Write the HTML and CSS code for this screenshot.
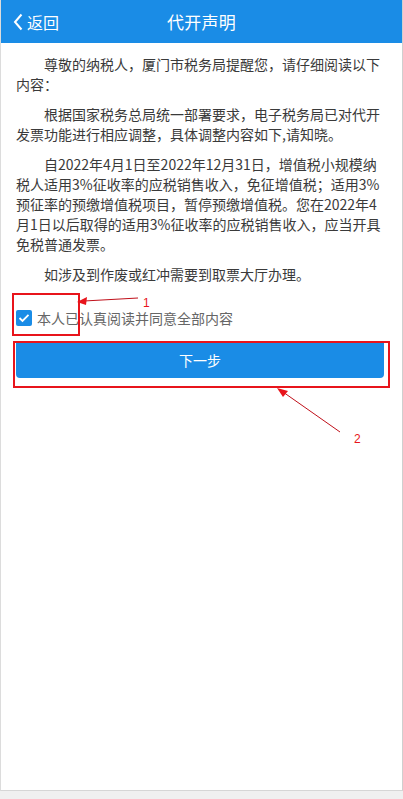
FILE: index.html
```html
<!DOCTYPE html>
<html lang="zh-CN">
<head>
<meta charset="utf-8">
<title>代开声明</title>
<link rel="stylesheet" href="styles.css">
</head>
<body>
<div class="page">
  <header class="header">
    <a class="back">
      <svg class="chev" width="10" height="18" viewBox="0 0 10 18"><path d="M8.5 1.5 L2 9 L8.5 16.5" fill="none" stroke="#fff" stroke-width="2"/></svg>
      <span>返回</span>
    </a>
    <h1 class="title">代开声明</h1>
  </header>
  <main class="content">
    <p class="para">尊敬的纳税人，厦门市税务局提醒您，请仔细阅读以下内容：</p>
    <p class="para">根据国家税务总局统一部署要求，电子税务局已对代开发票功能进行相应调整，具体调整内容如下,请知晓。</p>
    <p class="para">自2022年4月1日至2022年12月31日，增值税小规模纳税人适用3%征收率的应税销售收入，免征增值税；适用3%预征率的预缴增值税项目，暂停预缴增值税。您在2022年4月1日以后取得的适用3%征收率的应税销售收入，应当开具免税普通发票。</p>
    <p class="para">如涉及到作废或红冲需要到取票大厅办理。</p>
    <label class="agree">
      <span class="box"><svg width="12" height="10" viewBox="0 0 12 10"><path d="M1.5 5 L4.5 8 L10.5 1.8" fill="none" stroke="#fff" stroke-width="1.8"/></svg></span>
      <span class="agree-text">本人已认真阅读并同意全部内容</span>
    </label>
    <button class="next">下一步</button>
  </main>
  <svg class="marks" width="403" height="460" viewBox="0 0 403 460">
    <rect x="13" y="294" width="66" height="41" fill="none" stroke="#e8141b" stroke-width="2"/>
    <line x1="138" y1="298" x2="84" y2="301" stroke="#c0101a" stroke-width="1"/>
    <polygon points="77,302 87,297 86,305" fill="#e8141b"/>
    <text x="143" y="307" class="mark-num">1</text>
    <rect x="14" y="342" width="375" height="45" fill="none" stroke="#e8141b" stroke-width="2"/>
    <line x1="340" y1="432" x2="283" y2="392" stroke="#c0101a" stroke-width="1"/>
    <polygon points="277,388 288,391 283,397" fill="#e8141b"/>
    <text x="354" y="443" class="mark-num">2</text>
  </svg>
</div>
</body>
</html>
```

FILE: styles.css
```css
html, body {
  margin: 0;
  padding: 0;
}
body {
  background: #f0f0f0;
  font-family: "Noto Sans CJK SC", "Microsoft YaHei", sans-serif;
  height: 799px;
}
.page {
  position: relative;
  width: 401px;
  height: 790px;
  background: #fff;
  border-left: 1px solid #dcdcdc;
  border-right: 1px solid #cfcfcf;
  border-bottom: 1px solid #d6d6d6;
}
.header {
  position: relative;
  height: 43px;
  background: #1a8ce6;
  display: flex;
  align-items: center;
  justify-content: center;
  color: #fff;
}
.back {
  position: absolute;
  left: 12px;
  top: 0;
  height: 43px;
  display: flex;
  align-items: center;
  gap: 4px;
  font-size: 16px;
  color: #fff;
}
.chev {
  display: block;
}
.title {
  margin: 0;
  font-size: 17px;
  font-weight: normal;
  letter-spacing: 0.3px;
}
.content {
  padding: 11px 17px 0 15px;
}
.para {
  margin: 0 0 10px;
  font-size: 14px;
  line-height: 20px;
  text-indent: 2em;
  color: #3a3a3a;
}
.agree {
  display: flex;
  align-items: center;
  gap: 5px;
  margin-top: 26px;
  height: 16px;
}
.box {
  width: 16px;
  height: 16px;
  border-radius: 2px;
  background: #1a8ce6;
  display: flex;
  align-items: center;
  justify-content: center;
}
.agree-text {
  font-size: 14px;
  line-height: 16px;
  color: #666;
}
.next {
  display: block;
  width: 368px;
  height: 36px;
  margin-top: 16px;
  border: 0;
  border-radius: 0 0 4px 4px;
  background: #1a8ce6;
  color: #fff;
  font-family: inherit;
  font-size: 14px;
  padding: 0;
}
.marks {
  position: absolute;
  left: -1px;
  top: 0;
  pointer-events: none;
}
.mark-num {
  fill: #e8141b;
  font-family: "Liberation Sans", sans-serif;
  font-size: 12px;
}
```
